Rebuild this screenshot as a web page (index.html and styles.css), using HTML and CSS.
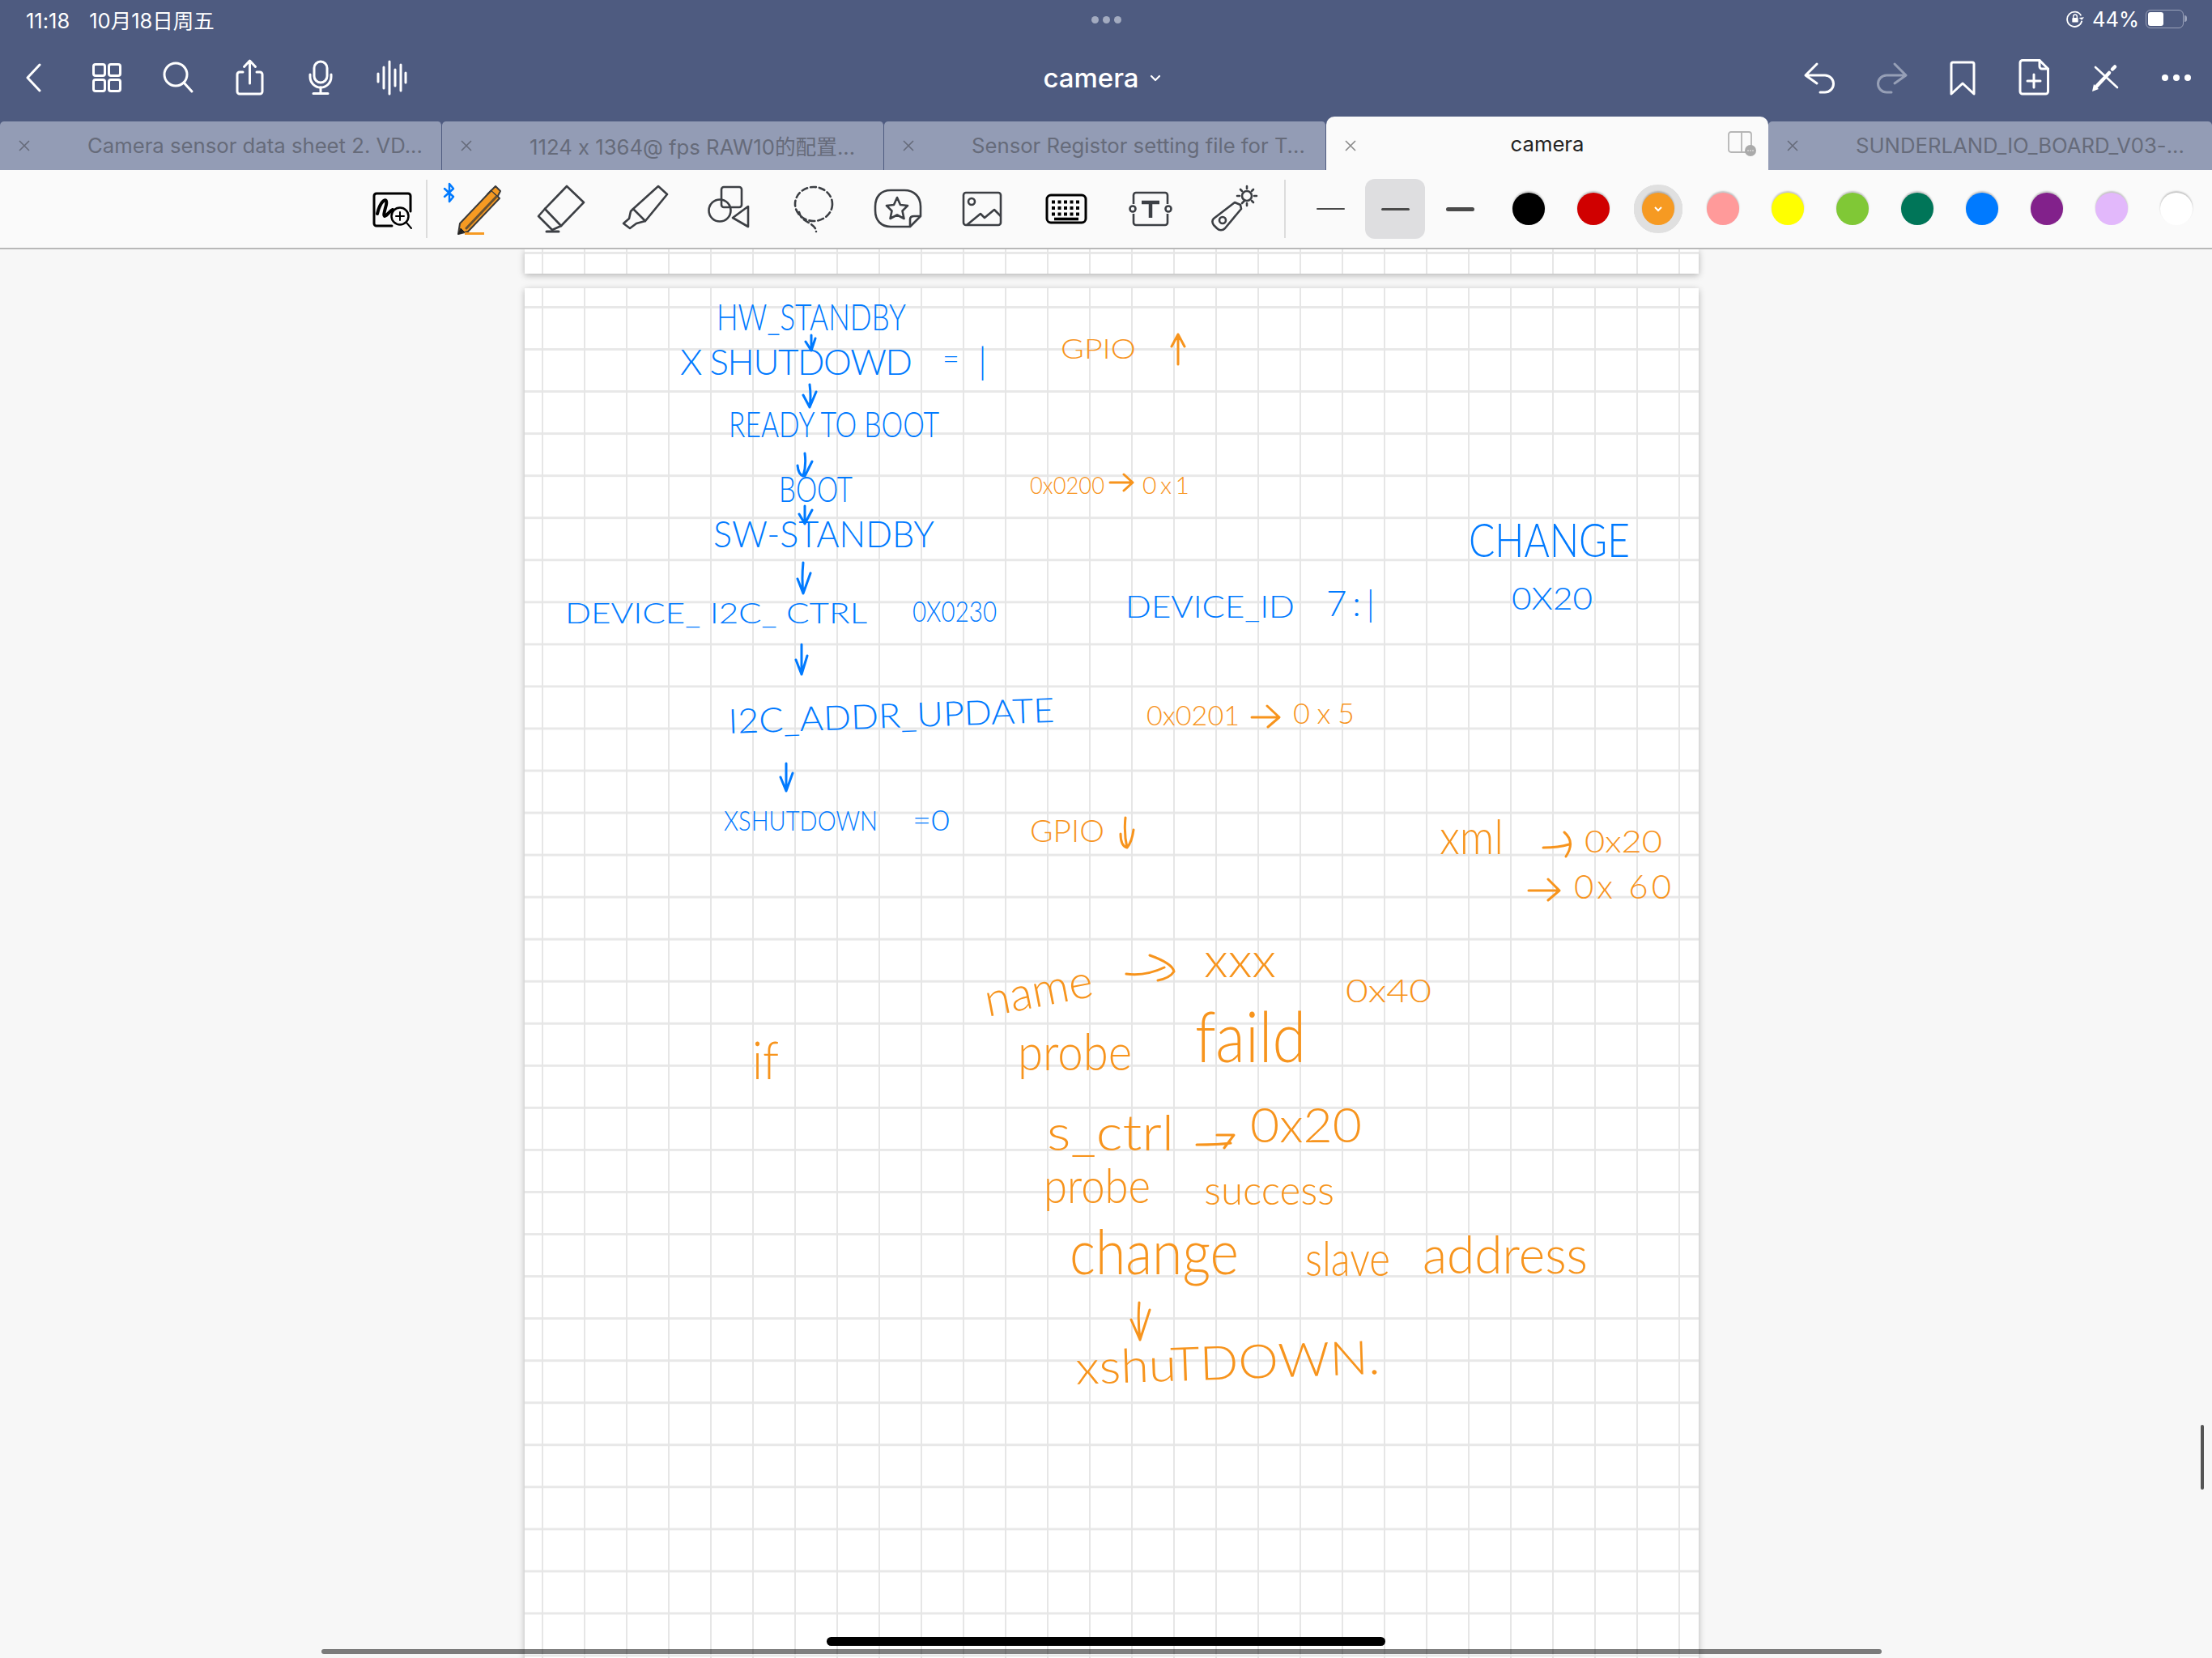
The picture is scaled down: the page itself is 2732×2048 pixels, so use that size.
FILE: index.html
```html
<!DOCTYPE html>
<html lang="zh">
<head>
  <meta charset="UTF-8" />
  <title>camera</title>
  <link rel="stylesheet" href="styles.css">
</head>
<body>
  <div class="status-bar">
    <div class="status-left"><span>11:18</span><span>10月18日周五</span></div>
    <div class="status-dots"><i></i><i></i><i></i></div>
    <div class="status-right">
      <svg class="lock-icon" viewBox="0 0 24 24" fill="none" stroke="#fff" stroke-width="2"><path d="M20 8A10 10 0 1 0 21 15"/><path d="M17 11l4 3 3-4" stroke-width="0" fill="#fff"/><rect x="8" y="11" width="8" height="6" rx="1" fill="#fff" stroke="none"/><path d="M9.500 11V9a2.500 2.500 0 0 1 5 0v2" stroke-width="1.500"/></svg>
      <span>44%</span>
      <div class="battery"><div class="battery-fill"></div></div>
      <div class="battery-tip"></div>
    </div>
  </div>

  <nav class="nav-bar">
    <div class="nav-group">
      <div class="nav-btn back-btn">
        <svg width="20" height="36" viewBox="0 0 20 36" fill="none" stroke="#fff" stroke-width="3" stroke-linecap="round" stroke-linejoin="round"><path d="M18 2L3 18L18 34"/></svg>
      </div>
      <div class="nav-btn">
        <svg class="nav-icon" viewBox="0 0 48 48" fill="none" stroke="#fff" stroke-width="3"><rect x="7.500" y="7.500" width="14" height="14" rx="2.500"/><rect x="26.500" y="7.500" width="14" height="14" rx="2.500"/><rect x="7.500" y="26.500" width="14" height="14" rx="2.500"/><rect x="26.500" y="26.500" width="14" height="14" rx="2.500"/></svg>
      </div>
      <div class="nav-btn">
        <svg class="nav-icon" viewBox="0 0 48 48" fill="none" stroke="#fff" stroke-width="3" stroke-linecap="round"><circle cx="21" cy="20" r="14"/><path d="M31 30L41 41"/></svg>
      </div>
      <div class="nav-btn">
        <svg class="nav-icon" viewBox="0 0 48 48" fill="none" stroke="#fff" stroke-width="3" stroke-linecap="round" stroke-linejoin="round"><path d="M16 17H12a3 3 0 0 0-3 3V41a3 3 0 0 0 3 3H37a3 3 0 0 0 3-3V20a3 3 0 0 0-3-3H33"/><path d="M24.500 31V4M17.500 10.500L24.500 3L31.500 10.500"/></svg>
      </div>
      <div class="nav-btn">
        <svg class="nav-icon" viewBox="0 0 48 48" fill="none" stroke="#fff" stroke-width="3" stroke-linecap="round"><rect x="16" y="4" width="16" height="26" rx="8"/><path d="M11 20v3a13 13 0 0 0 26 0v-3"/><path d="M24 36V43M15 43.500H33"/></svg>
      </div>
      <div class="nav-btn">
        <svg class="nav-icon" viewBox="0 0 48 48" fill="none" stroke="#fff" stroke-width="3" stroke-linecap="round"><path d="M7 19V29M14 11V37M21 4V44M28 14V34M35 8V40M41 18V30"/></svg>
      </div>
    </div>
    <div class="nav-title">
      <span>camera</span>
      <svg width="14" height="9" viewBox="0 0 14 9" fill="none" stroke="#fff" stroke-width="2.200" stroke-linecap="round" stroke-linejoin="round"><path d="M2 2L7 7L12 2"/></svg>
    </div>
    <div class="nav-group nav-right">
      <div class="nav-btn">
        <svg class="nav-icon" viewBox="0 0 48 48" fill="none" stroke="#fff" stroke-width="3" stroke-linecap="round" stroke-linejoin="round"><path d="M20 7L6 21L20 31M6 21H30a10.500 10.500 0 0 1 0 21H24"/></svg>
      </div>
      <div class="nav-btn">
        <svg class="nav-icon" viewBox="0 0 48 48" fill="none" stroke="#969fb6" stroke-width="3" stroke-linecap="round" stroke-linejoin="round"><path d="M28 7L42 21L28 31M42 21H18a10.500 10.500 0 0 0 0 21H24"/></svg>
      </div>
      <div class="nav-btn">
        <svg class="nav-icon" viewBox="0 0 48 48" fill="none" stroke="#fff" stroke-width="3" stroke-linecap="round" stroke-linejoin="round"><path d="M12 5H36a2 2 0 0 1 2 2V44L24 31L10 44V7a2 2 0 0 1 2-2Z"/></svg>
      </div>
      <div class="nav-btn">
        <svg class="nav-icon" viewBox="0 0 48 48" fill="none" stroke="#fff" stroke-width="3" stroke-linecap="round" stroke-linejoin="round"><path d="M10 2.500H31L41.500 13V41a3 3 0 0 1-3 3H10a3 3 0 0 1-3-3V5.500a3 3 0 0 1 3-3Z"/><path d="M31 2.500V10a3 3 0 0 0 3 3H41.500"/><path d="M24 20V36M16 28H32"/></svg>
      </div>
      <div class="nav-btn">
        <svg class="nav-icon" viewBox="0 0 48 48" fill="none" stroke="#fff" stroke-width="2.600" stroke-linecap="round"><path d="M12 11L39 36"/><path d="M13.500 34.500L29 18" stroke-width="4.500"/><path d="M8 41L10 32L16 38Z" fill="#fff" stroke="none"/><path d="M33 13.500L36 10.500" stroke-width="4.500"/></svg>
      </div>
      <div class="nav-btn">
        <svg class="nav-icon" viewBox="0 0 48 48" fill="#fff"><circle cx="10" cy="24" r="4"/><circle cx="24" cy="24" r="4"/><circle cx="38" cy="24" r="4"/></svg>
      </div>
    </div>
  </nav>

  <div class="tab-bar">
    <div class="tab">
      <svg class="tab-close" viewBox="0 0 14 14" stroke="#666b7a" stroke-width="1.600"><path d="M1 1L13 13M13 1L1 13"/></svg>
      <span class="tab-title">Camera sensor data sheet 2. VD...</span>
    </div>
    <div class="tab">
      <svg class="tab-close" viewBox="0 0 14 14" stroke="#666b7a" stroke-width="1.600"><path d="M1 1L13 13M13 1L1 13"/></svg>
      <span class="tab-title">1124 x 1364@ fps RAW10的配置...</span>
    </div>
    <div class="tab">
      <svg class="tab-close" viewBox="0 0 14 14" stroke="#666b7a" stroke-width="1.600"><path d="M1 1L13 13M13 1L1 13"/></svg>
      <span class="tab-title">Sensor Registor setting file for T...</span>
    </div>
    <div class="tab tab-active">
      <svg class="tab-close" viewBox="0 0 14 14" stroke="#8a8a8a" stroke-width="1.600"><path d="M1 1L13 13M13 1L1 13"/></svg>
      <span class="tab-title">camera</span>
      <svg class="split-icon" viewBox="0 0 36 32" fill="none"><rect x="1" y="1" width="28" height="25" rx="3" stroke="#b5b5b5" stroke-width="1.800"/><path d="M17 1V26" stroke="#b5b5b5" stroke-width="1.800"/><circle cx="28" cy="24" r="7" fill="#aaa"/><path d="M24.500 24h1M27.500 24h1M30.500 24h1" stroke="#fff" stroke-width="1.400"/></svg>
    </div>
    <div class="tab">
      <svg class="tab-close" viewBox="0 0 14 14" stroke="#666b7a" stroke-width="1.600"><path d="M1 1L13 13M13 1L1 13"/></svg>
      <span class="tab-title">SUNDERLAND_IO_BOARD_V03-...</span>
    </div>
  </div>

  <div class="toolbar">
    <div class="tool tool-first">
      <svg width="50" height="48" viewBox="0 0 50 48" fill="none" stroke="#000" stroke-width="3" stroke-linecap="round"><path d="M47 24V5a3 3 0 0 0-3-3H5a3 3 0 0 0-3 3V39a3 3 0 0 0 3 3H24"/><path d="M6 27C10 10 19 5 17 16C15 24 12 33 17 29C20 27 22 23 25 22" stroke-width="4"/><circle cx="34" cy="30" r="10.500" stroke-width="2.500"/><path d="M29 30H39M34 25V35M42 38L48 45" stroke-width="2"/></svg>
    </div>
    <div class="tool-sep"></div>
    <div class="tool tool-pencil">
      <svg width="80" height="72" viewBox="0 0 80 72" fill="none" stroke-linecap="round" stroke-linejoin="round">
        <path d="M7 11L18 21L13 27V5L18 11L7 21" stroke="#007aff" stroke-width="2.500"/>
        <path d="M26 54L65 13L75 23L36 64L24 67Z" fill="#f69a22" stroke="#3a3a3a" stroke-width="2"/>
        <path d="M34 60L71 21" stroke="#6b5230" stroke-width="3"/>
        <path d="M60 18L66 12M65 13L70 8L76 14L73 20" fill="#f69a22" stroke="#3a3a3a" stroke-width="2"/>
        <path d="M24 67L27 60L31 64Z" fill="#222" stroke="#222"/>
        <path d="M32 66.500H56" stroke="#f69a22" stroke-width="3" stroke-linecap="butt"/>
      </svg>
    </div>
    <div class="tool">
      <svg class="tool-icon" viewBox="0 0 60 60" fill="none" stroke="#3c3f44" stroke-width="2.600" stroke-linejoin="round" stroke-linecap="round"><path d="M37 2L58 22L30 51L10 30Z"/><path d="M10 30L2 39L19 56L30 51"/><path d="M12 58H27" stroke-width="3"/></svg>
    </div>
    <div class="tool">
      <svg class="tool-icon" viewBox="0 0 60 60" fill="none" stroke="#3c3f44" stroke-width="2.600" stroke-linejoin="round"><path d="M46 2L57 12L30 45L15 30Z"/><path d="M15 30L12 33L10 42L3 48L11 54L19 48L30 45"/></svg>
    </div>
    <div class="tool">
      <svg class="tool-icon" viewBox="0 0 60 60" fill="none" stroke="#3c3f44" stroke-width="2.600" stroke-linejoin="round"><rect x="20" y="3" width="25" height="25" rx="3"/><circle cx="18" cy="32" r="13.500"/><path d="M34 41L53 27V52Z"/></svg>
    </div>
    <div class="tool">
      <svg class="tool-icon" viewBox="0 0 60 60" fill="none" stroke="#3c3f44" stroke-width="2.600" stroke-linecap="round" stroke-dasharray="7 4"><ellipse cx="30" cy="24" rx="23" ry="21"/><path d="M12 34C14 44 24 46 28 50C32 53 33 56 33 58"/></svg>
    </div>
    <div class="tool">
      <svg class="tool-icon sticker-icon" viewBox="0 0 60 50" fill="none" stroke="#3c3f44" stroke-width="2.600" stroke-linejoin="round"><path d="M21 2H38C50 2 58 10 58 22V34L45 47H21C9 47 2 39 2 27V22C2 10 9 2 21 2Z"/><path d="M45 47V38C45 35 47 34 50 34H58"/><path d="M29 11L33 20L42 21L35.500 27.500L37.500 37L29 32.500L20.500 37L22.500 27.500L16 21L25 20Z"/></svg>
    </div>
    <div class="tool">
      <svg class="tool-icon" viewBox="0 0 60 60" fill="none" stroke="#3c3f44" stroke-width="2.600" stroke-linejoin="round"><rect x="7" y="10" width="46" height="40" rx="3"/><circle cx="17" cy="21" r="4"/><path d="M11 50L28 36L33 41L45 31L53 39"/></svg>
    </div>
    <div class="tool">
      <svg class="tool-icon" viewBox="0 0 60 60" fill="none" stroke="#000" stroke-width="3"><rect x="6" y="13" width="48" height="34" rx="5"/><path d="M12 21.500H49M12 29H49" stroke-width="4" stroke-dasharray="4 3.500"/><path d="M12 36.500H49" stroke-width="4" stroke-dasharray="4 3.500"/><path d="M15 42.500H45" stroke-width="3.600"/></svg>
    </div>
    <div class="tool">
      <svg class="tool-icon" viewBox="0 0 60 60" fill="none" stroke="#3c3f44" stroke-width="2.600"><path d="M9 24V13a3 3 0 0 1 3-3H48a3 3 0 0 1 3 3V24M9 36V47a3 3 0 0 0 3 3H48a3 3 0 0 0 3-3V36"/><circle cx="8" cy="30" r="3.500"/><circle cx="52" cy="30" r="3.500"/><path d="M19 22H41M30 22V41" stroke-width="4.500"/></svg>
    </div>
    <div class="tool">
      <svg class="tool-icon" viewBox="0 0 60 60" fill="none" stroke="#3c3f44" stroke-width="2.600" stroke-linecap="round"><path d="M30 22L37 25L38 30L18 54C15 57 11 57 8 54L4 50C2 47 2 44 4 42Z" stroke-linejoin="round"/><circle cx="15" cy="44" r="4"/><path d="M39 23L42 20" /><circle cx="45" cy="14" r="6"/><path d="M45 2V5M45 23V26M33 14H36M54 14H57M37 6L39 8M53 6L51 8M53 22L51 20"/></svg>
    </div>
    <div class="tool-sep tool-sep-right"></div>
    <div class="line-widths">
      <div class="line-slot"><div class="line-bar line-thin"></div></div>
      <div class="line-slot line-selected"><div class="line-bar line-mid"></div></div>
      <div class="line-slot"><div class="line-bar line-thick"></div></div>
    </div>
    <div class="colors">
      <div class="swatch-slot"><div class="swatch swatch-black"></div></div>
      <div class="swatch-slot"><div class="swatch swatch-red"></div></div>
      <div class="swatch-slot swatch-selected">
        <div class="swatch swatch-orange">
          <svg width="12" height="8" viewBox="0 0 12 8" fill="none" stroke="#fff" stroke-width="2"><path d="M2 2L6 6L10 2"/></svg>
        </div>
      </div>
      <div class="swatch-slot"><div class="swatch swatch-pink"></div></div>
      <div class="swatch-slot"><div class="swatch swatch-yellow"></div></div>
      <div class="swatch-slot"><div class="swatch swatch-green"></div></div>
      <div class="swatch-slot"><div class="swatch swatch-teal"></div></div>
      <div class="swatch-slot"><div class="swatch swatch-blue"></div></div>
      <div class="swatch-slot"><div class="swatch swatch-purple"></div></div>
      <div class="swatch-slot"><div class="swatch swatch-lilac"></div></div>
      <div class="swatch-slot"><div class="swatch swatch-white"></div></div>
    </div>
  </div>

  <main class="canvas">
    <div class="sheet sheet-prev"></div>
    <div class="sheet sheet-current">
      <!-- handwritten notes, coordinates are screen pixels -->
      <svg class="ink" viewBox="648 356 1450 1692">
        <g class="ink-blue">
          <text x="885" y="408" font-size="46" textLength="234" lengthAdjust="spacingAndGlyphs">HW_STANDBY</text>
          <text x="840" y="463" font-size="44" textLength="287" lengthAdjust="spacing">X SHUTDOWD</text>
          <text x="1164" y="456" font-size="36">=</text>
          <text x="1208" y="462" font-size="46">|</text>
          <text x="900" y="540" font-size="44" textLength="260" lengthAdjust="spacingAndGlyphs">READY TO BOOT</text>
          <text x="962" y="620" font-size="44" textLength="91" lengthAdjust="spacingAndGlyphs">BOOT</text>
          <text x="881" y="676" font-size="46" textLength="273" lengthAdjust="spacingAndGlyphs">SW-STANDBY</text>
          <text x="698" y="770" font-size="36" textLength="373" lengthAdjust="spacingAndGlyphs">DEVICE_ I2C_ CTRL</text>
          <text x="1127" y="768" font-size="36" textLength="104" lengthAdjust="spacingAndGlyphs">0X0230</text>
          <text x="900" y="906" font-size="42" textLength="403" lengthAdjust="spacingAndGlyphs" transform="rotate(-2 900 906)">I2C_ADDR_UPDATE</text>
          <text x="894" y="1026" font-size="34" textLength="190" lengthAdjust="spacingAndGlyphs">XSHUTDOWN</text>
          <text x="1127" y="1026" font-size="36" textLength="46" lengthAdjust="spacingAndGlyphs">=0</text>
          <text x="1814" y="688" font-size="58" textLength="199" lengthAdjust="spacingAndGlyphs">CHANGE</text>
          <text x="1867" y="753" font-size="38" textLength="100" lengthAdjust="spacingAndGlyphs">0X20</text>
          <text x="1390" y="763" font-size="38" textLength="209" lengthAdjust="spacingAndGlyphs">DEVICE_ID</text>
          <text x="1638" y="761" font-size="44" textLength="60" lengthAdjust="spacing">7:|</text>
          <path d="M1002 414V433M995 422L1002 433L1007 418M1000 475Q1002 490 1000 503M992 488L1000 503L1008 484M994 560Q996 575 992 588Q986 586 985 575M994 588L1003 570M994 625V647M987 635L994 647L1003 630M992 695Q990 715 992 733M985 715L992 733L1001 708M990 796V833M983 815L990 833L997 810M971 943V977M964 960L971 977L979 955"/>
        </g>
        <g class="ink-orange">
          <text x="1310" y="443" font-size="34" textLength="93" lengthAdjust="spacingAndGlyphs">GPIO</text>
          <text x="1272" y="610" font-size="30" textLength="92" lengthAdjust="spacingAndGlyphs">0x0200</text>
          <text x="1411" y="610" font-size="30" textLength="58" lengthAdjust="spacing">0x1</text>
          <text x="1416" y="896" font-size="34" textLength="115" lengthAdjust="spacingAndGlyphs">0x0201</text>
          <text x="1597" y="894" font-size="36" textLength="76" lengthAdjust="spacing">0x5</text>
          <text x="1272" y="1040" font-size="38" textLength="92" lengthAdjust="spacingAndGlyphs">GPIO</text>
          <text x="1778" y="1055" font-size="60" textLength="79" lengthAdjust="spacingAndGlyphs">xml</text>
          <text x="1957" y="1053" font-size="38" textLength="96" lengthAdjust="spacingAndGlyphs">0x20</text>
          <text x="1944" y="1110" font-size="42" textLength="120" lengthAdjust="spacing">0x 60</text>
          <text x="1220" y="1256" font-size="58" textLength="135" lengthAdjust="spacingAndGlyphs" transform="rotate(-11 1220 1256)">name</text>
          <text x="1487" y="1207" font-size="60" textLength="89" lengthAdjust="spacingAndGlyphs">xxx</text>
          <text x="1662" y="1238" font-size="40" textLength="106" lengthAdjust="spacingAndGlyphs">0x40</text>
          <text x="929" y="1333" font-size="66" textLength="33" lengthAdjust="spacingAndGlyphs">if</text>
          <text x="1257" y="1322" font-size="64" textLength="141" lengthAdjust="spacingAndGlyphs">probe</text>
          <text x="1476" y="1312" font-size="86" textLength="137" lengthAdjust="spacingAndGlyphs">faild</text>
          <text x="1293" y="1421" font-size="62" textLength="157" lengthAdjust="spacingAndGlyphs">s_ctrl</text>
          <text x="1544" y="1411" font-size="60" textLength="138" lengthAdjust="spacingAndGlyphs">0x20</text>
          <text x="1289" y="1486" font-size="60" textLength="132" lengthAdjust="spacingAndGlyphs">probe</text>
          <text x="1487" y="1488" font-size="50" textLength="161" lengthAdjust="spacingAndGlyphs">success</text>
          <text x="1321" y="1574" font-size="76" textLength="209" lengthAdjust="spacingAndGlyphs">change</text>
          <text x="1612" y="1576" font-size="60" textLength="105" lengthAdjust="spacingAndGlyphs">slave</text>
          <text x="1757" y="1573" font-size="66" textLength="204" lengthAdjust="spacingAndGlyphs">address</text>
          <text x="1329" y="1710" font-size="58" textLength="376" lengthAdjust="spacingAndGlyphs" transform="rotate(-2 1329 1710)">xshuTDOWN.</text>
          <path d="M1390 1010Q1388 1030 1392 1047Q1384 1045 1384 1030M1392 1047Q1398 1040 1400 1025M1407 1609Q1405 1630 1408 1655M1397 1630L1408 1655L1420 1618M1455 450V413M1447 428L1455 413L1463 428M1371 596H1399M1388 586L1399 596L1388 606M1546 886H1579M1565 872L1580 886L1566 898M1906 1047Q1925 1047 1938 1043M1932 1028Q1946 1040 1934 1058M1888 1100H1924M1912 1086L1926 1100L1912 1112M1391 1203Q1415 1206 1438 1195M1420 1180Q1448 1190 1450 1200Q1445 1208 1430 1211M1478 1414Q1505 1414 1520 1412M1503 1402L1524 1402L1512 1418"/>
        </g>
      </svg>
    </div>
  </main>

  <div class="scroll-v"></div>
  <div class="home-bar"></div>
  <div class="scroll-h"></div>
</body>
</html>
```

FILE: styles.css
```css
* {
  box-sizing: border-box;
}

html, body {
  margin: 0;
  width: 2732px;
  height: 2048px;
  overflow: hidden;
}

body {
  position: relative;
  display: flex;
  flex-direction: column;
  font-family: Inter, "Noto Sans CJK SC", sans-serif;
  font-feature-settings: "calt" 0;
  background: #f7f7f7;
}

/* status bar */
.status-bar {
  height: 48px;
  flex: none;
  padding: 0 31px 2px 32px;
  display: flex;
  align-items: center;
  justify-content: space-between;
  position: relative;
  background: #4e5b80;
  color: #fff;
  font-size: 25.500px;
}

.status-left {
  display: flex;
  align-items: baseline;
  gap: 24px;
}

.status-dots {
  position: absolute;
  left: 1348px;
  top: 20px;
  display: flex;
  gap: 5px;
}

.status-dots i {
  width: 9px;
  height: 9px;
  border-radius: 50%;
  background: #a3abc0;
}

.status-right {
  display: flex;
  align-items: center;
}

.lock-icon {
  width: 22px;
  height: 22px;
  margin-right: 10px;
}

.battery {
  width: 47px;
  height: 23px;
  margin-left: 8px;
  padding: 2px;
  border: 1.5px solid #9aa2ba;
  border-radius: 6px;
}

.battery-fill {
  width: 19px;
  height: 100%;
  border-radius: 3px;
  background: #fff;
}

.battery-tip {
  width: 3px;
  height: 8px;
  margin-left: 1px;
  border-radius: 0 3px 3px 0;
  background: #9aa2ba;
}

/* nav bar */
.nav-bar {
  height: 102px;
  flex: none;
  display: grid;
  grid-template-columns: 1fr auto 1fr;
  align-items: center;
  padding-bottom: 6px;
  background: #4e5b80;
}

.nav-group {
  display: flex;
  align-items: center;
}

.nav-right {
  justify-content: flex-end;
}

.nav-btn {
  width: 88px;
  height: 48px;
  display: flex;
  align-items: center;
  justify-content: center;
}

.back-btn {
  justify-content: flex-start;
  padding-left: 31px;
}

.nav-icon {
  width: 48px;
  height: 48px;
}

.nav-title {
  display: flex;
  align-items: center;
  gap: 13px;
  margin-right: 10px;
  color: #fff;
  font-size: 33px;
  font-weight: 500;
}

/* tabs */
.tab-bar {
  height: 60px;
  flex: none;
  display: flex;
  align-items: flex-end;
  background: #4e5b80;
}

.tab {
  width: 546px;
  height: 60px;
  flex: none;
  position: relative;
  display: flex;
  align-items: center;
  padding: 0 0 2px 108px;
  border-right: 1px solid #4e5b80;
  border-radius: 5px 5px 0 0;
  background: #939cb5;
  color: #666b7a;
  font-size: 25.700px;
}

.tab:last-child {
  width: 548px;
  border-right: none;
}

.tab-close {
  position: absolute;
  left: 23px;
  top: 23px;
  width: 14px;
  height: 14px;
}

.tab-title {
  white-space: nowrap;
}

.tab-active {
  height: 66px;
  padding: 0;
  justify-content: center;
  border-right: none;
  border-radius: 10px 10px 0 0;
  background: #fafafa;
  color: #222;
}

.tab-active .tab-close {
  left: 23px;
  top: 29px;
}

.split-icon {
  position: absolute;
  right: 14px;
  top: 18px;
  width: 36px;
  height: 32px;
}

/* toolbar */
.toolbar {
  height: 98px;
  flex: none;
  display: flex;
  align-items: center;
  padding: 0 0 0 444px;
  border-bottom: 2px solid #b8b8b8;
  background: #fafafa;
}

.tool {
  width: 104px;
  height: 96px;
  flex: none;
  display: flex;
  align-items: center;
  justify-content: center;
}

.tool-first {
  width: 82px;
  padding-top: 5px;
}

.tool-pencil svg {
  margin-left: -14px;
}

.tool-icon {
  width: 60px;
  height: 60px;
}

.sticker-icon {
  height: 50px;
}

.tool-sep {
  width: 2px;
  height: 72px;
  flex: none;
  margin-right: 9px;
  background: #dcdcdc;
}

.tool-sep-right {
  margin: 0 15px 0 9px;
}

.line-widths {
  display: flex;
}

.line-slot {
  width: 80px;
  height: 74px;
  display: flex;
  align-items: center;
  justify-content: center;
}

.line-selected {
  width: 74px;
  margin: 0 3px;
  border-radius: 12px;
  background: #dedee0;
}

.line-bar {
  width: 35px;
  border-radius: 3px;
  background: #4a4a4a;
}

.line-thin {
  height: 2px;
}

.line-mid {
  height: 3px;
}

.line-thick {
  height: 5px;
}

.colors {
  display: flex;
  margin-left: 5px;
}

.swatch-slot {
  width: 80px;
  height: 60px;
  display: flex;
  align-items: center;
  justify-content: center;
  border-radius: 50%;
}

.swatch-selected {
  background: radial-gradient(circle at center, #e0e0e0 30px, transparent 30.500px);
}

.swatch {
  width: 40px;
  height: 40px;
  display: flex;
  align-items: center;
  justify-content: center;
  border-radius: 50%;
  box-shadow: 0 -2px 2px rgba(0, 0, 0, 0.22);
}

.swatch-black { background: #000; }
.swatch-red { background: #d00000; }
.swatch-orange { background: #f69a22; }
.swatch-pink { background: #ff9a9a; }
.swatch-yellow { background: #ffff00; }
.swatch-green { background: #80c836; }
.swatch-teal { background: #007558; }
.swatch-blue { background: #007aff; }
.swatch-purple { background: #82218b; }
.swatch-lilac { background: #e2b8fb; }
.swatch-white { background: #fff; }

/* notebook pages */
.canvas {
  flex: 1;
  display: flex;
  flex-direction: column;
  align-items: center;
  gap: 18px;
  padding-left: 14px;
  overflow: hidden;
  background: #f7f7f7;
}

.sheet {
  width: 1450px;
  flex: none;
  background-color: #fff;
  background-image:
    linear-gradient(to right, #e6e6e6 2px, transparent 2px),
    linear-gradient(to bottom, #e8e8e8 3px, transparent 3px);
  background-size: 52px 52.060px;
  box-shadow: 0 2px 8px rgba(0, 0, 0, 0.28);
}

.sheet-prev {
  height: 30px;
  background-position: 21px 3px;
}

.sheet-current {
  position: relative;
  height: 1800px;
  background-position: 21px 22px;
}

.ink {
  position: absolute;
  left: 0;
  top: 0;
  width: 1450px;
  height: 1692px;
  font-family: Lato, "Open Sans", sans-serif;
  font-weight: 300;
}

.ink path {
  fill: none;
  stroke-width: 3;
  stroke-linecap: round;
  stroke-linejoin: round;
}

.ink-blue {
  fill: #007aff;
}

.ink-blue path {
  stroke: #007aff;
}

.ink-orange {
  fill: #f7941d;
}

.ink-orange path {
  stroke: #f7941d;
}

/* overlays */
.scroll-v {
  position: absolute;
  left: 2718px;
  top: 1760px;
  width: 4px;
  height: 80px;
  border-radius: 2px;
  background: #555;
}

.home-bar {
  position: absolute;
  left: 1021px;
  top: 2022px;
  width: 690px;
  height: 11px;
  border-radius: 6px;
  background: #000;
}

.scroll-h {
  position: absolute;
  left: 397px;
  top: 2037px;
  width: 1927px;
  height: 6px;
  border-radius: 3px;
  background: rgba(0, 0, 0, 0.5);
}
```
